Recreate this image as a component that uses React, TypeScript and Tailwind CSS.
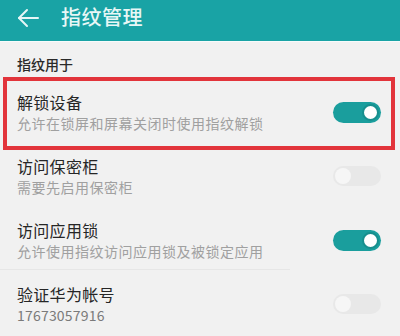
import { ReactNode } from "react";

interface Row {
  title: string,
  sub: string,
  on: boolean,
}

const rows: Row[] = [
  { title: "解锁设备", sub: "允许在锁屏和屏幕关闭时使用指纹解锁", on: true },
  { title: "访问保密柜", sub: "需要先启用保密柜", on: false },
  { title: "访问应用锁", sub: "允许使用指纹访问应用锁及被锁定应用", on: true },
  { title: "验证华为帐号", sub: "17673057916", on: false },
]

export default function App(): ReactNode {
  return (
    <div className="w-[400px] h-[336px] overflow-hidden bg-[#f1f1f1] font-['Noto_Sans_CJK_SC',sans-serif]">
      <header className="h-[42px] bg-[#19a3a5] flex items-start pt-[3px] border-b border-[#f7fbfb]">
        <svg width="22" height="20" viewBox="0 0 22 20" className="ml-[17px] mt-[5px]" fill="none" stroke="#e6f6f6" strokeWidth="2" strokeLinecap="round" strokeLinejoin="round">
          <path d="M21 10H2" />
          <path d="M10 2L2 10L10 18" />
        </svg>
        <h1 className="ml-[22px] text-[20px] leading-[28px] font-medium text-[#e8f7f6] tracking-[0.5px]">指纹管理</h1>
      </header>

      <div className="px-[17px] pt-3 pb-[7px] text-[14px] leading-[20px] font-medium text-[#2a2a2a]">指纹用于</div>

      {rows.map((row: Row, index: number): ReactNode => {
        return <SettingRow row={row} highlighted={index == 0} divider={index == 2} key={row.title} />
      })}
    </div>
  )
}

interface SettingRowProps {
  row: Row,
  highlighted: boolean,
  divider: boolean,
}

function SettingRow({ row, highlighted, divider }: SettingRowProps): ReactNode {
  const isNumber = /^\d+$/.test(row.sub)

  return (
    <div className="relative h-[64px] flex items-start pl-[17px] pr-[19px] pt-[10px]">
      {highlighted && (
        <span className="absolute -top-1 left-[3px] right-[5px] -bottom-[5px] border-4 border-[#e2343b]" />
      )}
      <div className="flex-1">
        <div className="text-[16px] leading-[22px] text-[#262626] tracking-[0.3px]">{row.title}</div>
        <div className={isNumber ?
          "text-[14px] leading-[20px] text-[#7a7a7a] tracking-[0.2px]" :
          "text-[14px] leading-[20px] text-[#a0a0a0] tracking-[0.5px]"}>{row.sub}</div>
      </div>
      <div className="mt-[11px]">
        <Toggle on={row.on} />
      </div>
      {divider && (
        <div className="absolute left-0 w-[290px] bottom-[3px] h-px bg-[#e6e6e6]" />
      )}
    </div>
  )
}

function Toggle({ on }: { on: boolean }): ReactNode {
  if (on) {
    return (
      <div className="w-[48px] h-[21px] rounded-full bg-[#1a9e9d] flex items-center justify-end pr-[2px]">
        <div className="size-[17px] rounded-full bg-white border-2 border-[#178f8e]" />
      </div>
    )
  }

  return (
    <div className="w-[48px] h-[20px] rounded-full bg-[#e8e8e8] flex items-center pl-[2px]">
      <div className="size-[16px] rounded-full bg-[#f6f6f6]" />
    </div>
  )
}
